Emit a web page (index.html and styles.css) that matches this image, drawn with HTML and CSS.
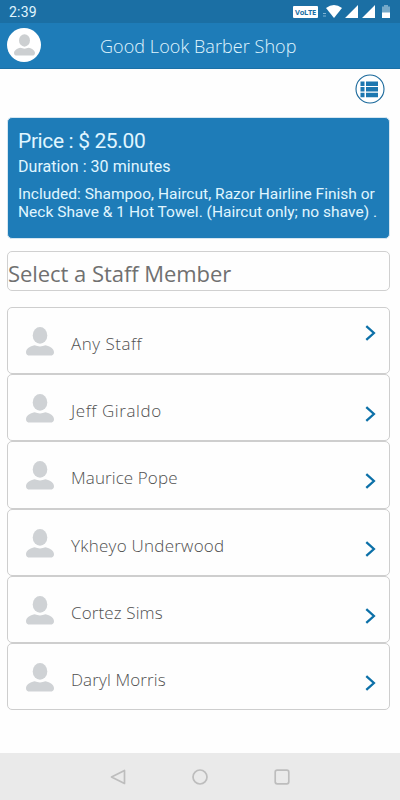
FILE: index.html
```html
<!DOCTYPE html>
<html lang="en">
<head>
<meta charset="utf-8">
<title>Good Look Barber Shop</title>
<link rel="stylesheet" href="styles.css">
</head>
<body>
<svg class="defs" aria-hidden="true">
  <symbol id="person" viewBox="0 0 28 29">
    <ellipse cx="14" cy="8.4" rx="7.3" ry="8.3"/>
    <path d="M8.5 18.3Q14 20.5 19.5 18.3C24 19.2 28 22 28 25.2Q28 28.6 24 28.6H4Q0 28.6 0 25.2C0 22 4 19.2 8.5 18.3Z"/>
  </symbol>
  <symbol id="chevron" viewBox="0 0 10 16"><path d="M.8 1.2 8.4 8 .8 14.8" fill="none" stroke="#0c70a8" stroke-width="2.3"/></symbol>
</svg>
<div class="status">
  <span class="time">2:39</span>
  <div class="signals">
    <span class="volte">VoLTE</span>
    <svg class="signal-icons" width="68" height="16" viewBox="0 0 68 16">
      <path d="M4 5Q12 -1 20 5L12 15Z" fill="#fff"/>
      <path d="M1 10.500h3M1 13h3" stroke="#7fb3d2"/>
      <path d="M36 2V15H23ZM53 2V15H40Z" fill="#fff"/>
      <path d="M60 3.500h2V2h4v1.500h2V10h-8Z" fill="#75a9c9"/>
      <path d="M60 9.500h8v5.500h-8Z" fill="#fff"/>
    </svg>
  </div>
</div>
<header class="header">
  <div class="avatar"><svg width="21" height="22"><use href="#person"/></svg></div>
  <h1 class="title">Good Look Barber Shop</h1>
</header>
<main class="content">
  <div class="toolbar">
    <svg width="30" height="30" viewBox="0 0 30 30">
      <circle cx="15" cy="15" r="14" fill="#fff" stroke="#17679a" stroke-width="1.100"/>
      <path d="M5.500 7.500h4v4.500h-4ZM11 7.500h12v4.500H11ZM5.500 13h4v4.500h-4ZM11 13h12v4.500H11ZM5.500 18.700h4v4.500h-4ZM11 18.700h12v4.500H11Z" fill="#1c77b0"/>
    </svg>
  </div>
  <section class="service">
    <p class="price">Price : $ 25.00</p>
    <p class="duration">Duration : 30 minutes</p>
    <p class="details">Included: Shampoo, Haircut, Razor Hairline Finish or<br>Neck Shave &amp; 1 Hot Towel. (Haircut only; no shave) .</p>
  </section>
  <h2 class="select"><span>Select a Staff Member</span></h2>
  <ul class="staff">
    <li class="member"><svg class="person"><use href="#person"/></svg><span class="name any">Any Staff</span><svg class="chevron"><use href="#chevron"/></svg></li>
    <li class="member"><svg class="person"><use href="#person"/></svg><span class="name jeff">Jeff Giraldo</span><svg class="chevron"><use href="#chevron"/></svg></li>
    <li class="member"><svg class="person"><use href="#person"/></svg><span class="name maurice">Maurice Pope</span><svg class="chevron"><use href="#chevron"/></svg></li>
    <li class="member"><svg class="person"><use href="#person"/></svg><span class="name ykheyo">Ykheyo Underwood</span><svg class="chevron"><use href="#chevron"/></svg></li>
    <li class="member"><svg class="person"><use href="#person"/></svg><span class="name cortez">Cortez Sims</span><svg class="chevron"><use href="#chevron"/></svg></li>
    <li class="member"><svg class="person"><use href="#person"/></svg><span class="name daryl">Daryl Morris</span><svg class="chevron"><use href="#chevron"/></svg></li>
  </ul>
</main>
<nav class="navbar">
  <svg width="16" height="16" viewBox="0 0 16 16"><path d="M14.500 1.500v13L1.500 8Z"/></svg>
  <svg width="16" height="16" viewBox="0 0 16 16"><circle cx="8" cy="8" r="7"/></svg>
  <svg width="16" height="16" viewBox="0 0 16 16"><rect x="1.200" y="1.200" width="13.600" height="13.600" rx="2"/></svg>
</nav>
</body>
</html>
```
FILE: styles.css
```css
* { box-sizing: border-box; }
body, h1, h2, p, ul { margin: 0; padding: 0; font-weight: 400; }
body {
  width: 400px;
  height: 800px;
  display: flex;
  flex-direction: column;
  overflow: hidden;
  background: #fefefe;
  font-family: "Open Sans", "Noto Sans", sans-serif;
}
svg { display: block; flex: none; }
.defs { position: absolute; width: 0; height: 0; }
.status {
  height: 23px;
  flex: none;
  display: flex;
  justify-content: space-between;
  padding: 0 10px 0 9px;
  background: #1b6fa4;
  color: #e0f6ff;
}
.time { font: 14px/25px Roboto, sans-serif; letter-spacing: .2px; }
.signals { display: flex; gap: 4px; padding-top: 3px; }
.volte {
  width: 25px;
  height: 12px;
  margin-top: 3px;
  background: #fff;
  border-radius: 1px;
  color: #1b6fa4;
  font: 700 7.5px/12px "Open Sans", sans-serif;
  letter-spacing: -.3px;
  text-align: center;
}
.header {
  height: 46px;
  flex: none;
  display: flex;
  align-items: flex-start;
  padding: 5px 0 0 7px;
  background: #1e7cb8;
  border-bottom: 1px solid #1b70a6;
}
.avatar {
  width: 34px;
  height: 34px;
  display: flex;
  align-items: center;
  justify-content: center;
  border-radius: 50%;
  background: #fff;
  fill: #cccfd1;
}
.title {
  margin-left: 59px;
  font-size: 18px;
  line-height: 37px;
  font-weight: 300;
  letter-spacing: .07px;
  color: #e0f6ff;
  white-space: nowrap;
}
.content { flex: 1; padding: 5px 10px 0 7px; }
.toolbar { display: flex; justify-content: flex-end; height: 43px; padding-right: 5px; }
.service {
  height: 122px;
  padding: 12px 11px;
  border: 1px solid #d5e6f1;
  border-radius: 5px;
  background: #1e7cb8;
  color: #e0f6ff;
  font-family: Roboto, sans-serif;
  white-space: nowrap;
}
.service p { margin-left: -1px; }
.price { font-size: 21px; line-height: 22px; letter-spacing: -.37px; }
.duration { padding-top: 2px; font-size: 16px; line-height: 26px; letter-spacing: .05px; }
.details { margin-top: 5px; font-size: 15.5px; line-height: 18px; letter-spacing: .02px; }
.select {
  height: 40px;
  margin-top: 12px;
  border: 1px solid #d0d0d0;
  border-radius: 5px;
  color: #707070;
  font-size: 22px;
  line-height: 42px;
  letter-spacing: -.05px;
  white-space: nowrap;
}
.staff { margin-top: 16px; list-style: none; }
.member {
  height: 67.2px;
  display: flex;
  align-items: flex-start;
  border: 1px solid #cecece;
  border-radius: 5px;
  padding: 19px 13px 0 18px;
}
.person { width: 28px; height: 29px; fill: #cfd2d5; }
.name {
  margin-left: 17px;
  flex: 1;
  font-size: 17px;
  line-height: 34px;
  font-weight: 300;
  color: #505050;
  white-space: nowrap;
}
.any { letter-spacing: .5px; }
.jeff { letter-spacing: .57px; }
.maurice { letter-spacing: .1px; }
.ykheyo { letter-spacing: .25px; }
.cortez { letter-spacing: .12px; }
.daryl { letter-spacing: .12px; }
.chevron { width: 11px; height: 16px; margin-top: 12px; }
.member:first-child .chevron { margin-top: -2px; }
.navbar {
  height: 47px;
  flex: none;
  display: flex;
  justify-content: center;
  align-items: center;
  gap: 66px;
  background: #eaeaea;
  fill: none;
  stroke: #bdbdbd;
  stroke-width: 1.7;
  stroke-linejoin: round;
}
```
